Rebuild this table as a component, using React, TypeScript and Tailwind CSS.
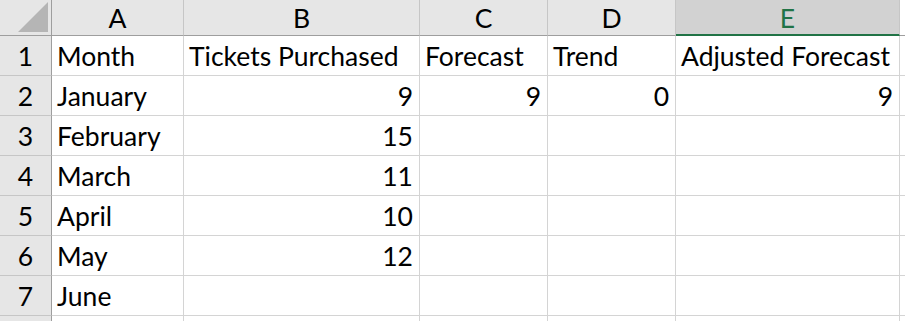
import React from "react";

const cols = ["A", "B", "C", "D", "E"];
const rows: (string | number | null)[][] = [
  ["Month", "Tickets Purchased", "Forecast", "Trend", "Adjusted Forecast"],
  ["January", 9, 9, 0, 9],
  ["February", 15, null, null, null],
  ["March", 11, null, null, null],
  ["April", 10, null, null, null],
  ["May", 12, null, null, null],
  ["June", null, null, null, null],
  [null, null, null, null, null],
];

export default function App() {
  return (
    <div
      className="w-[905px] h-[321px] overflow-hidden bg-white text-black"
      style={{ fontFamily: "Lato, 'Noto Sans', sans-serif" }}
    >
      <div className="grid grid-cols-[52px_132px_236px_128px_128px_224px_1fr] grid-rows-[36px_repeat(8,40px)] text-[26.5px]">
        {/* corner */}
        <div className="bg-[#e6e6e6] border-r border-b border-r-[#9e9e9e] border-b-[#9e9e9e] relative">
          <div className="absolute right-[3px] bottom-[3px] w-0 h-0 border-l-[30px] border-l-transparent border-b-[30px] border-b-[#b5b5b5]" />
        </div>
        {cols.map((c) => (
          <div
            key={c}
            className={
              c === "E"
                ? "bg-[#d2d2d2] text-[#217346] border-r border-r-[#c6c6c6] border-b-2 border-b-[#217346] flex items-end justify-center pb-[3px] leading-none"
                : "bg-[#e6e6e6] border-r border-r-[#c6c6c6] border-b border-b-[#9e9e9e] flex items-end justify-center pb-[4px] leading-none"
            }
          >
            {c}
          </div>
        ))}
        <div className="bg-white border-b border-b-[#9e9e9e]" />
        {rows.map((r, i) => (
          <React.Fragment key={i}>
            <div className="bg-[#e6e6e6] border-r border-r-[#9e9e9e] border-b border-b-[#c6c6c6] flex items-end justify-center pb-[6px] leading-none">
              {i < 7 ? i + 1 : null}
            </div>
            {r.map((v, j) => (
              <div
                key={j}
                className={
                  "border-r border-b border-[#d4d4d4] flex items-end pb-[6px] leading-none whitespace-nowrap " +
                  (typeof v === "number" ? "justify-end pr-[6px]" : "justify-start pl-[5px]")
                }
              >
                {v}
              </div>
            ))}
            <div className="border-b border-[#d4d4d4]" />
          </React.Fragment>
        ))}
      </div>
    </div>
  );
}
